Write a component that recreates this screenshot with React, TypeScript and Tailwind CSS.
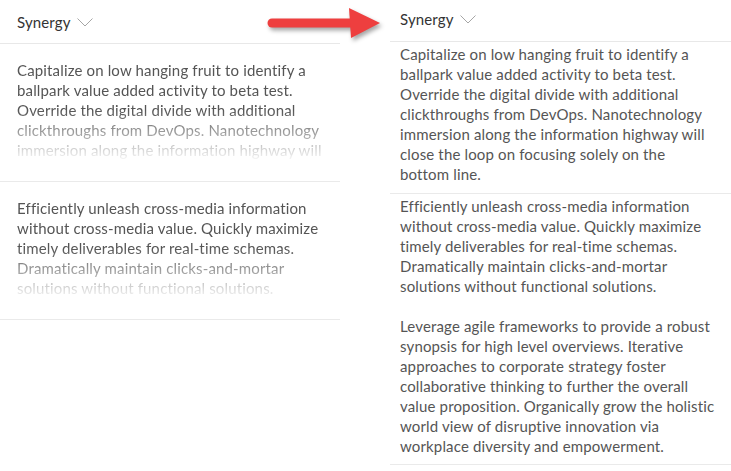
import React from 'react'

const first =
  'Capitalize on low hanging fruit to identify a ballpark value added activity to beta test. Override the digital divide with additional clickthroughs from DevOps. Nanotechnology immersion along the information highway will close the loop on focusing solely on the bottom line.'
const second =
  'Efficiently unleash cross-media information without cross-media value. Quickly maximize timely deliverables for real-time schemas. Dramatically maintain clicks-and-mortar solutions without functional solutions.'
const third =
  'Leverage agile frameworks to provide a robust synopsis for high level overviews. Iterative approaches to corporate strategy foster collaborative thinking to further the overall value proposition. Organically grow the holistic world view of disruptive innovation via workplace diversity and empowerment.'

function Chevron() {
  return (
    <svg width="16" height="9" viewBox="0 0 16 9" className="ml-[6px] mt-[1px]">
      <path d="M0.5 0.5 L8 8 L15.5 0.5" fill="none" stroke="#a6a6a6" strokeWidth="1" />
    </svg>
  )
}

function Arrow() {
  return (
    <svg
      width="130"
      height="44"
      viewBox="262 2 130 44"
      className="absolute left-[262px] top-[2px] drop-shadow-[2px_3px_2px_rgba(0,0,0,0.35)]"
    >
      <path d="M272 18.5 L352 18.5 L352 27.5 L272 27.5 A4.5 4.5 0 0 1 272 18.5 Z" fill="#ee3f3f" />
      <polygon points="349,8 380,23 351,38" fill="#ee3f3f" />
    </svg>
  )
}

export default function App() {
  return (
    <div className="relative flex h-[471px] w-[731px] overflow-hidden bg-white font-['Lato',sans-serif] text-[15px] leading-5 tracking-[0.15px]">
      {/* collapsed card */}
      <div className="w-[340px]">
        <div className="flex h-[44px] items-center border-b border-[#e8e8e8] pl-[17px] text-[#333]">
          Synergy
          <Chevron />
        </div>
        <div className="border-b border-[#eaeaea] pb-[21px] pl-[17px] pt-4">
          <p className="h-[100px] w-[315px] overflow-hidden text-[#555] [mask-image:linear-gradient(to_bottom,black_50%,rgba(0,0,0,0.05)_100%)]">
            {first}
          </p>
        </div>
        <div className="border-b border-[#eaeaea] pb-[21px] pl-[17px] pt-4">
          <p className="h-[100px] w-[315px] overflow-hidden text-[#555] [mask-image:linear-gradient(to_bottom,black_50%,rgba(0,0,0,0.05)_100%)]">
            {second}
          </p>
        </div>
      </div>

      {/* expanded card */}
      <div className="ml-[50px] flex-1">
        <div className="flex h-[42px] items-center border-b border-[#e8e8e8] pb-[3px] pl-[10px] text-[#333]">
          Synergy
          <Chevron />
        </div>
        <div className="border-b border-[#eaeaea] pb-[9px] pl-[10px] pt-[2px]">
          <p className="w-[316px] text-[#555]">{first}</p>
        </div>
        <div className="border-b border-[#eaeaea] pb-[8px] pl-[10px] pt-[2px]">
          <p className="w-[316px] text-[#555]">{second}</p>
          <p className="mt-5 w-[316px] text-[#555]">{third}</p>
        </div>
      </div>

      <Arrow />
    </div>
  )
}
